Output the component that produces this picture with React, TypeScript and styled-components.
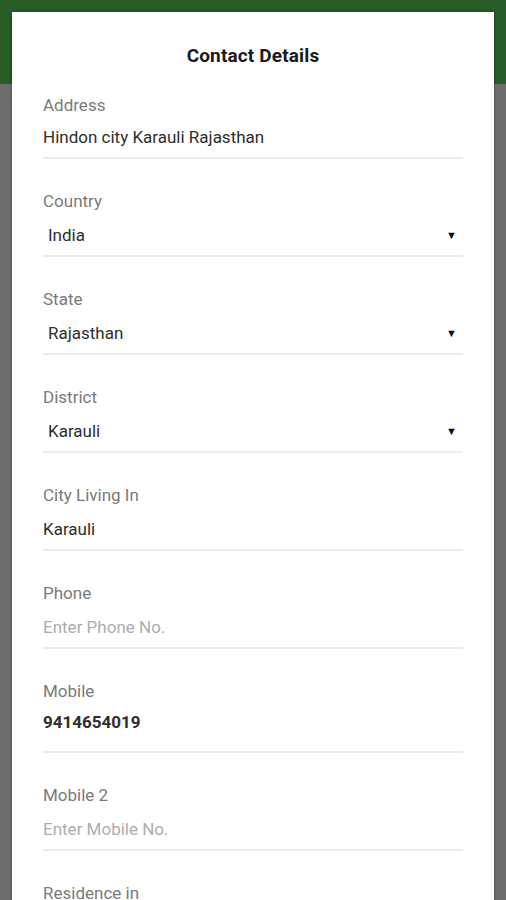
import React from "react";
import styled, { createGlobalStyle } from "styled-components";

const GlobalStyle = createGlobalStyle`
  html, body {
    margin: 0;
    padding: 0;
    height: 100%;
    overflow: hidden;
    background: #6e6e6e;
    font-family: Roboto, "Noto Sans", sans-serif;
  }
`;

type Field = {
  label: string;
  value?: string;
  placeholder?: string;
  select?: boolean;
  bold?: boolean;
  variant?: "short" | "normal" | "tall";
};

const fields: Field[] = [
  { label: "Address", value: "Hindon city Karauli Rajasthan", variant: "short" },
  { label: "Country", value: "India", select: true },
  { label: "State", value: "Rajasthan", select: true },
  { label: "District", value: "Karauli", select: true },
  { label: "City Living In", value: "Karauli" },
  { label: "Phone", placeholder: "Enter Phone No." },
  { label: "Mobile", value: "9414654019", bold: true, variant: "tall" },
  { label: "Mobile 2", placeholder: "Enter Mobile No." },
  { label: "Residence in", value: "" },
];

function App() {
  return (
    <>
      <GlobalStyle />
      <Screen>
        <AppBar />
        <Overlay>
          <Dialog>
            <Title>Contact Details</Title>
            {fields.map((f, idx) => (
              <FieldBox key={idx}>
                <Label>{f.label}</Label>
                <Control variant={f.variant || "normal"} indent={!!f.select}>
                  {f.value ? (
                    <Value bold={!!f.bold}>{f.value}</Value>
                  ) : (
                    <Placeholder>{f.placeholder}</Placeholder>
                  )}
                  {f.select && <Arrow>▼</Arrow>}
                </Control>
              </FieldBox>
            ))}
          </Dialog>
        </Overlay>
      </Screen>
    </>
  );
}

const Screen = styled.div`
  position: relative;
  width: 506px;
  height: 900px;
  background: #6e6e6e;
  overflow: hidden;
`;

const AppBar = styled.div`
  height: 84px;
  background: #285c27;
`;

const Overlay = styled.div`
  position: absolute;
  top: 12px;
  left: 12px;
  right: 12px;
`;

const Dialog = styled.div`
  background: #fff;
  padding: 32px 31px 0 31px;
  box-shadow: 0 0 3px rgba(0, 0, 0, 0.35);
`;

const Title = styled.div`
  text-align: center;
  font-size: 19px;
  font-weight: bold;
  letter-spacing: 0.15px;
  line-height: 24px;
  color: #1a1a1a;
  margin-bottom: 27px;
`;

const FieldBox = styled.div`
  display: flex;
  flex-direction: column;
  margin-bottom: 32px;
`;

const Label = styled.div`
  font-size: 17px;
  line-height: 20px;
  color: #7a7a7a;
`;

const Control = styled.div<{ variant: "short" | "normal" | "tall"; indent: boolean }>`
  display: flex;
  align-items: center;
  box-sizing: border-box;
  height: ${(props) => (props.variant === "short" ? "44px" : props.variant === "tall" ? "52px" : "46px")};
  padding-top: ${(props) => (props.variant === "short" ? "2px" : props.variant === "tall" ? "0" : "4px")};
  padding-bottom: ${(props) => (props.variant === "tall" ? "8px" : "0")};
  padding-left: ${(props) => (props.indent ? "5px" : "0")};
  border-bottom: 2px solid #ececec;
`;

const Value = styled.span<{ bold: boolean }>`
  flex: 1;
  font-size: 17px;
  font-weight: ${(props) => (props.bold ? "bold" : "normal")};
  color: #2e2e2e;
`;

const Placeholder = styled.span`
  flex: 1;
  font-size: 17px;
  color: #adadad;
`;

const Arrow = styled.span`
  font-size: 11px;
  color: #111;
  margin-right: 6px;
`;

export default App;
